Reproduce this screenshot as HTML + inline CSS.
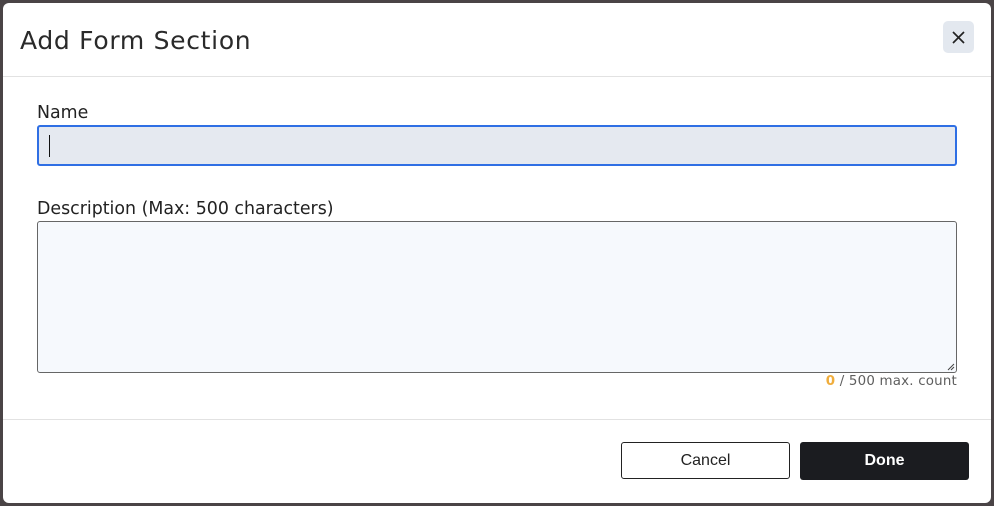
<!DOCTYPE html>
<html><head><style>
body{margin:0;width:994px;height:506px;background:#4a4446;position:relative;overflow:hidden;font-family:"Liberation Sans","DejaVu Sans",sans-serif;}
.m{position:absolute;left:3px;top:3px;width:988px;height:500px;background:#fff;border-radius:6px;}
.t{position:absolute;left:17px;top:23px;font-size:25px;color:#2a2a2a;letter-spacing:0.7px;font-family:"DejaVu Sans",sans-serif;}
.x{position:absolute;left:940px;top:18px;width:31px;height:32px;background:#e3e8ef;border-radius:5px;}
.hr{position:absolute;left:0;width:988px;height:1px;background:#e2e2e2;}
.l{position:absolute;left:34px;font-size:17.4px;color:#222;font-family:"DejaVu Sans",sans-serif;}
.in{position:absolute;left:34px;top:122px;width:916px;height:37px;border:2px solid #2f6fe4;border-radius:3px;background:#e5e9f0;}
.cur{position:absolute;left:10px;top:8px;width:1px;height:22px;background:#111;}
.ta{position:absolute;left:34px;top:218px;width:918px;height:150px;border:1px solid #666;border-radius:3px;background:#f6f9fd;}
.c{position:absolute;right:34px;top:371px;font-size:13.4px;color:#5e5e5e;font-family:"DejaVu Sans",sans-serif;letter-spacing:0.2px;}
.b{position:absolute;top:439px;width:167px;height:36px;border-radius:3px;font-size:16px;text-align:center;line-height:36px;}
</style></head><body>
<div class="m">
<div class="t">Add Form Section</div>
<div class="x"><svg width="31" height="32" viewBox="0 0 31 32"><path d="M10 11L21 22M21 11L10 22" stroke="#222" stroke-width="1.7"/></svg></div>
<div class="hr" style="top:73px"></div>
<div class="l" style="top:100px">Name</div>
<div class="in"><div class="cur"></div></div>
<div class="l" style="top:196px">Description (Max: 500 characters)</div>
<div class="ta"><svg style="position:absolute;right:1px;bottom:1px" width="10" height="10"><path d="M9 3L3 9M9 6L6 9" stroke="#444" stroke-width="1"/></svg></div>
<div class="c"><span style="color:#f0ad3c;font-weight:bold">0</span> / 500 max. count</div>
<div class="hr" style="top:416px"></div>
<div class="b" style="left:618px;border:1px solid #222;width:167px;height:35px;color:#222;">Cancel</div>
<div class="b" style="left:797px;width:169px;height:38px;line-height:38px;background:#1b1c20;color:#fff;font-weight:bold;">Done</div>
</div>
</body></html>
